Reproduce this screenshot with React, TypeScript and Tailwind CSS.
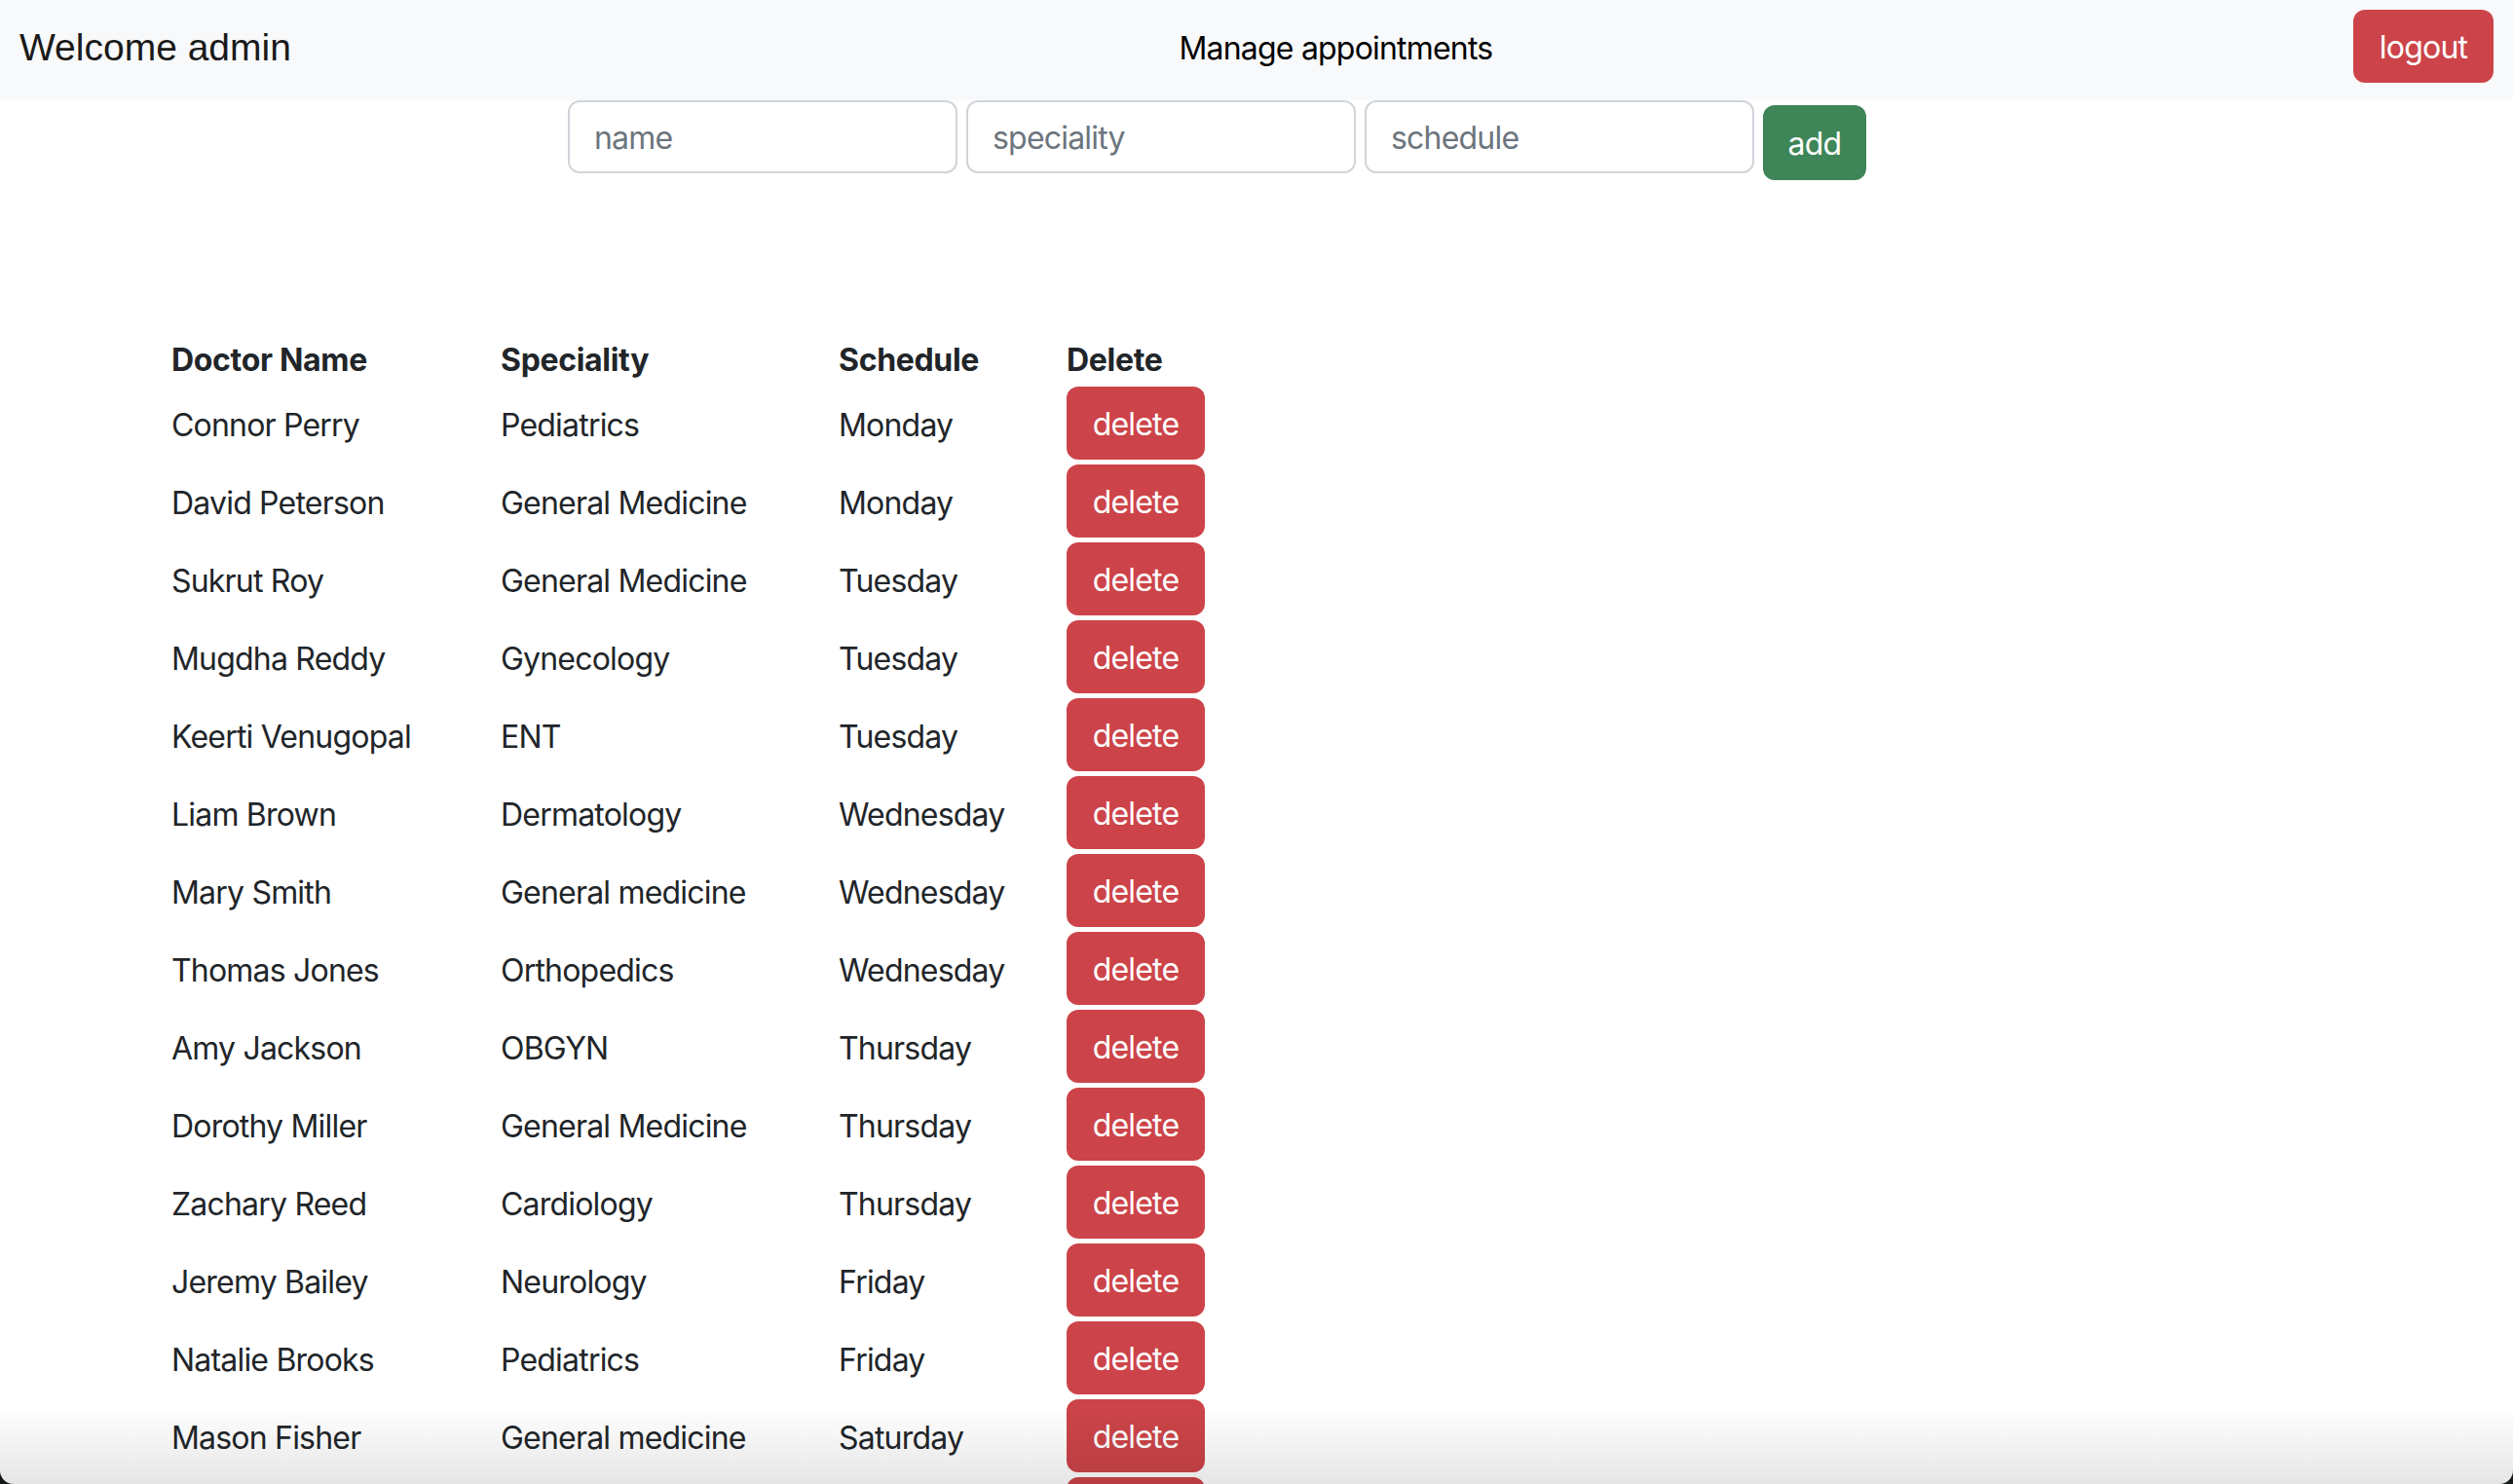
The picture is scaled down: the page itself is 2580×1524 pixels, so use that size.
import React from "react";

const doctors = [
  { name: "Connor Perry", speciality: "Pediatrics", schedule: "Monday" },
  { name: "David Peterson", speciality: "General Medicine", schedule: "Monday" },
  { name: "Sukrut Roy", speciality: "General Medicine", schedule: "Tuesday" },
  { name: "Mugdha Reddy", speciality: "Gynecology", schedule: "Tuesday" },
  { name: "Keerti Venugopal", speciality: "ENT", schedule: "Tuesday" },
  { name: "Liam Brown", speciality: "Dermatology", schedule: "Wednesday" },
  { name: "Mary Smith", speciality: "General medicine", schedule: "Wednesday" },
  { name: "Thomas Jones", speciality: "Orthopedics", schedule: "Wednesday" },
  { name: "Amy Jackson", speciality: "OBGYN", schedule: "Thursday" },
  { name: "Dorothy Miller", speciality: "General Medicine", schedule: "Thursday" },
  { name: "Zachary Reed", speciality: "Cardiology", schedule: "Thursday" },
  { name: "Jeremy Bailey", speciality: "Neurology", schedule: "Friday" },
  { name: "Natalie Brooks", speciality: "Pediatrics", schedule: "Friday" },
  { name: "Mason Fisher", speciality: "General medicine", schedule: "Saturday" }
];

function Field({ placeholder }: { placeholder: string }) {
  return (
    <input
      placeholder={placeholder}
      className="w-[400px] h-[75px] rounded-[12px] border-2 border-[#d1d5da] bg-white px-[25px] pt-[2px] text-[32px] tracking-[-0.025em] text-[#212529] placeholder:text-[#6c757d] outline-none"
    />
  );
}

function DeleteButton({ label = "delete" }: { label?: string }) {
  return (
    <button className="h-[75px] w-[142px] rounded-[12px] bg-[#cc4449] pt-[2px] text-[32px] tracking-[-0.025em] text-white">
      {label}
    </button>
  );
}

export default function App() {
  return (
    <div className="h-[1524px] overflow-hidden bg-[#141a18] font-['Inter',sans-serif]">
      <div className="relative h-full overflow-hidden rounded-b-[14px] bg-white">
        {/* navbar */}
        <header className="flex h-[103px] items-start bg-[#f8f9fa] px-[20px] pt-[10px]">
          <div className="flex h-[75px] items-center pt-[3px] font-['Liberation_Sans',sans-serif] text-[39px] text-[#1a1a1a]">
            Welcome admin
          </div>
          <div className="ml-[28px] flex h-[75px] flex-1 items-center justify-center pt-[4px] text-[32px] tracking-[-0.025em] text-black">
            Manage appointments
          </div>
          <button className="h-[75px] w-[144px] rounded-[12px] bg-[#cc4449] pt-[2px] text-[32px] tracking-[-0.025em] text-white">
            logout
          </button>
        </header>

        {/* add form */}
        <div className="flex items-start gap-[9px] pl-[583px]">
          <Field placeholder="name" />
          <Field placeholder="speciality" />
          <Field placeholder="schedule" />
          <button className="mt-[5px] h-[77px] w-[106px] rounded-[12px] bg-[#3e8558] pt-[2px] text-[32px] tracking-[-0.025em] text-white">
            add
          </button>
        </div>

        {/* doctors table */}
        <table className="ml-[176px] mt-[161px] table-fixed border-collapse text-[32px] tracking-[-0.025em] text-[#212529]">
          <thead>
            <tr className="h-[51px] tracking-[-0.01em]">
              <th className="w-[338px] p-0 text-left align-top font-bold leading-[48px]">Doctor Name</th>
              <th className="w-[347px] p-0 text-left align-top font-bold leading-[48px]">Speciality</th>
              <th className="w-[234px] p-0 text-left align-top font-bold leading-[48px]">Schedule</th>
              <th className="w-[142px] p-0 text-left align-top font-bold leading-[48px]">Delete</th>
            </tr>
          </thead>
          <tbody>
            {doctors.map((d, i) => (
              <tr key={i} className="h-[80px]">
                <td className="p-0 align-middle leading-[48px]">{d.name}</td>
                <td className="p-0 align-middle leading-[48px]">{d.speciality}</td>
                <td className="p-0 align-middle leading-[48px]">{d.schedule}</td>
                <td className="p-0 align-top">
                  <DeleteButton />
                </td>
              </tr>
            ))}
            {/* next row is cut off by the window, only the top of its button shows */}
            <tr className="h-[80px]">
              <td className="p-0" />
              <td className="p-0" />
              <td className="p-0" />
              <td className="p-0 align-top">
                <DeleteButton label="" />
              </td>
            </tr>
          </tbody>
        </table>

        {/* window edge shading */}
        <div className="pointer-events-none absolute inset-x-0 bottom-0 h-[80px] bg-linear-to-b from-transparent to-black/10" />
      </div>
    </div>
  );
}
